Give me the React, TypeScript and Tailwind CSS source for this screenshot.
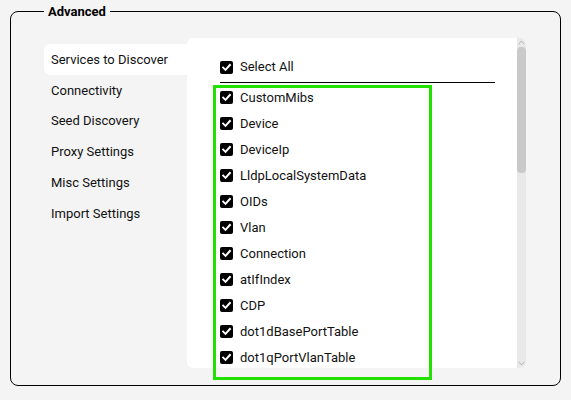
import React from "react";

const navItems = [
  "Services to Discover",
  "Connectivity",
  "Seed Discovery",
  "Proxy Settings",
  "Misc Settings",
  "Import Settings",
];

const services = [
  "CustomMibs",
  "Device",
  "DeviceIp",
  "LldpLocalSystemData",
  "OIDs",
  "Vlan",
  "Connection",
  "atIfIndex",
  "CDP",
  "dot1dBasePortTable",
  "dot1qPortVlanTable",
];

function Check() {
  return (
    <span className="flex h-[13px] w-[13px] shrink-0 items-center justify-center rounded-[2px] bg-black">
      <svg width="11" height="11" viewBox="0 0 11 11">
        <path d="M2.2 5.6 L4.5 7.9 L8.9 3" fill="none" stroke="white" strokeWidth="2" strokeLinecap="square" />
      </svg>
    </span>
  );
}

export default function App() {
  return (
    <div className="relative h-[400px] w-[571px] overflow-hidden bg-[#f4f4f4] px-[10px] pt-[4px] font-['Roboto',sans-serif] text-[13px] text-[#111]">
      <fieldset className="h-[382px] rounded-[8px] border border-black pl-[33px]">
        <legend className="px-[4px] text-[13px] font-bold leading-[15px] text-black">Advanced</legend>
        <div className="mt-[19px] flex">
          <div className="flex w-[143px] flex-col pt-[6px]">
            {navItems.map((n, i) => (
              <div
                key={n}
                className={
                  i === 0
                    ? "flex h-[31px] items-center rounded-l-[6px] bg-white pl-[7px]"
                    : "flex h-[30.8px] items-center pl-[7px]"
                }
              >
                {n}
              </div>
            ))}
          </div>
          <div className="flex h-[330px] w-[339px] overflow-hidden rounded-[6px] bg-white">
            <div className="flex-1 overflow-hidden pl-[33px] pr-[22px] pt-[16px]">
              <div className="flex h-[26px] items-center">
                <Check />
                <span className="ml-[7px]">Select All</span>
              </div>
              <div className="mt-[2px] h-px bg-black" />
              <div className="mt-[1.5px] flex flex-col">
                {services.map((s) => (
                  <div key={s} className="flex h-[26px] shrink-0 items-center">
                    <Check />
                    <span className="ml-[7px]">{s}</span>
                  </div>
                ))}
              </div>
            </div>
            <div className="flex w-[9px] flex-col bg-[#e9e9e9]">
              <div className="flex h-[9px] items-center justify-center">
                <svg width="7" height="5" viewBox="0 0 7 5">
                  <path d="M0.8 4.2 L3.5 1 L6.2 4.2" fill="none" stroke="#b5b5b5" strokeWidth="1" />
                </svg>
              </div>
              <div className="h-[126px] rounded-[4px] bg-[#c9c9c9]" />
              <div className="flex-1" />
              <div className="flex h-[9px] items-center justify-center">
                <svg width="7" height="5" viewBox="0 0 7 5">
                  <path d="M0.8 0.8 L3.5 4 L6.2 0.8" fill="none" stroke="#b5b5b5" strokeWidth="1" />
                </svg>
              </div>
            </div>
          </div>
        </div>
      </fieldset>
      <div className="absolute left-[213px] top-[85px] h-[295px] w-[219px] border-[3px] border-[#22e000]" />
    </div>
  );
}
